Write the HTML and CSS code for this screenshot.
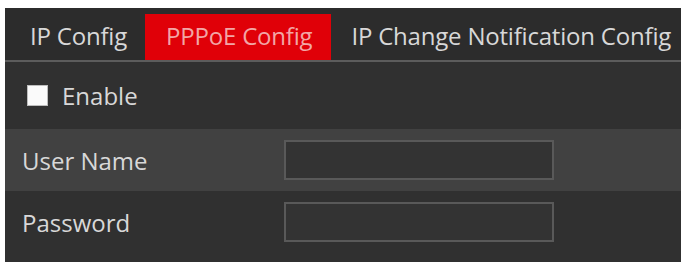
FILE: index.html
```html
<!DOCTYPE html>
<html lang="en">

<head>
    <meta charset="UTF-8">
    <meta name="viewport" content="width=device-width, initial-scale=1.0">
    <title>PPPoE Config</title>
    <link rel="stylesheet" href="styles.css">
</head>

<body>
    <div class="panel">
        <div class="tabs">
            <div class="tab">IP Config</div>
            <div class="tab active">PPPoE Config</div>
            <div class="tab">IP Change Notification Config</div>
        </div>

        <div class="row enable-row">
            <label class="check">
                <span class="box"></span>
                Enable
            </label>
        </div>

        <div class="row field-row shaded">
            <span class="label">User Name</span>
            <input class="input" type="text">
        </div>

        <div class="row field-row">
            <span class="label">Password</span>
            <input class="input" type="password">
        </div>
    </div>
</body>

</html>
```

FILE: styles.css
```css
body {
    margin: 0;
    padding: 0;
    background-color: white;
    font-family: "Open Sans", "Noto Sans", sans-serif;
}

.panel {
    width: 676px;
    height: 254px;
    margin: 8px 0 0 5px;
    background-color: #303030;
    color: #d8d8d8;
}

.tabs {
    display: flex;
    align-items: flex-end;
    height: 52px;
    padding-left: 5px;
    background-color: #2c2c2c;
    border-bottom: 2px solid #5c5c5c;
}

.tab {
    height: 46px;
    line-height: 44px;
    padding: 0 18px 0 20px;
    font-size: 24px;
    letter-spacing: -0.2px;
    white-space: nowrap;
}

.tab.active {
    padding: 0 19px 0 21px;
    background-color: #e00008;
    color: #f2a6a6;
}

.row {
    display: flex;
    align-items: center;
}

.enable-row {
    height: 67px;
    padding-left: 22px;
}

.check {
    display: flex;
    align-items: center;
    gap: 14px;
    font-size: 24px;
}

.box {
    width: 19px;
    height: 19px;
    background-color: #fafafa;
    border: 1px solid #bdbdbd;
}

.field-row {
    height: 62px;
    padding-left: 17px;
}

.shaded {
    background-color: #414141;
}

.label {
    width: 262px;
    font-size: 24px;
}

.input {
    box-sizing: border-box;
    width: 270px;
    height: 40px;
    margin: 0;
    background-color: #333333;
    border: 2px solid #595959;
    outline: none;
}
```
